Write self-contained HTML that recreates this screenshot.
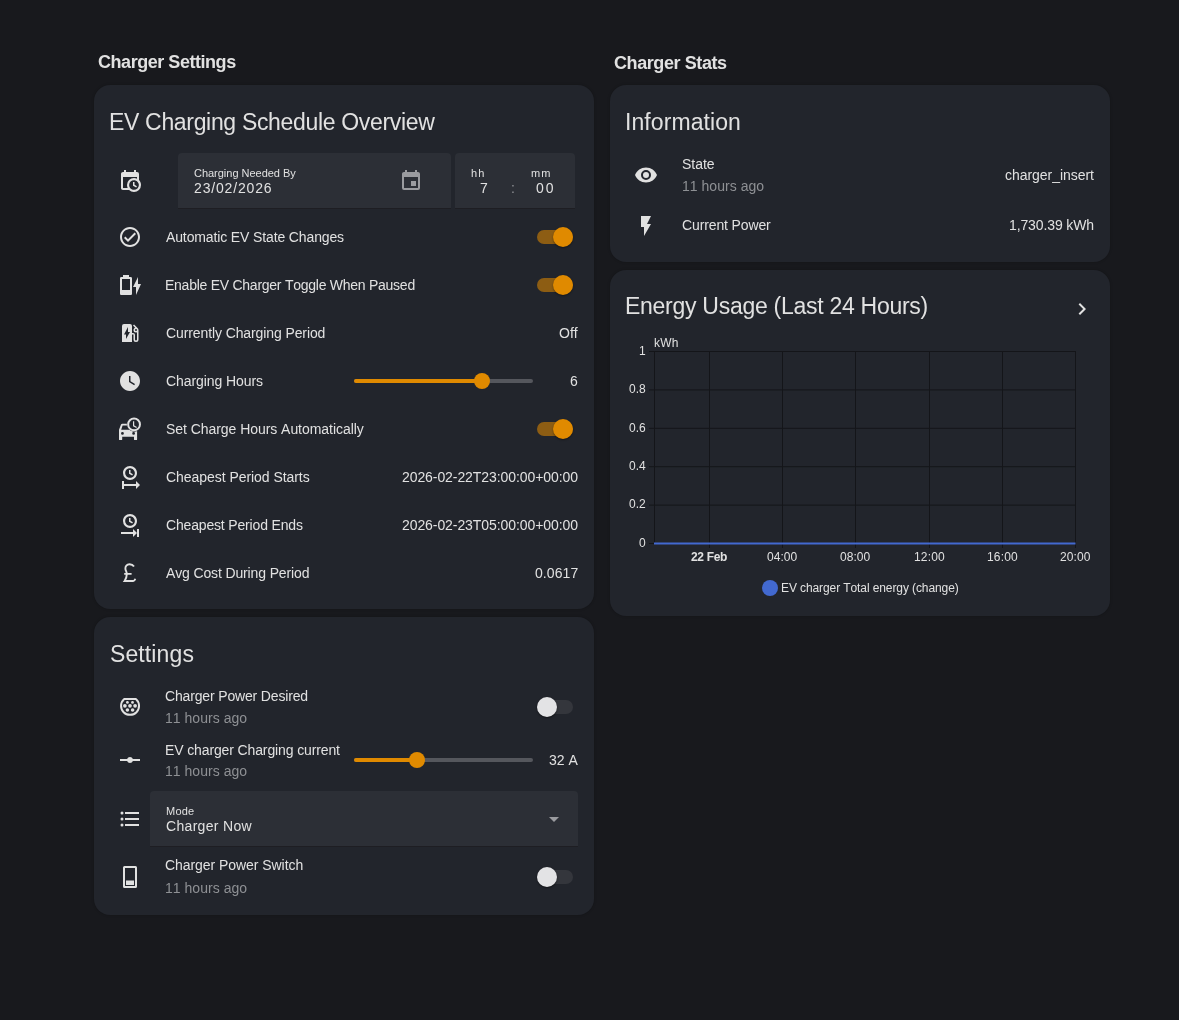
<!DOCTYPE html>
<html><head><meta charset="utf-8"><style>
html,body{margin:0;padding:0;width:1179px;height:1020px;overflow:hidden;background:rgb(24,25,29);}
body{position:relative;font-family:"Liberation Sans",sans-serif;}
.t{position:absolute;white-space:nowrap;line-height:1;font-kerning:none;will-change:transform;}
.r{position:absolute;}
.i{position:absolute;overflow:visible;}
</style></head><body>
<div class="r" style="left:94px;top:85px;width:500px;height:524px;background:rgb(34,37,44);border-radius:16px;box-shadow:0 0 3px rgba(0,0,0,0.22);"></div>
<div class="r" style="left:94px;top:617px;width:500px;height:298px;background:rgb(34,37,44);border-radius:16px;box-shadow:0 0 3px rgba(0,0,0,0.22);"></div>
<div class="r" style="left:610px;top:85px;width:500px;height:177px;background:rgb(34,37,44);border-radius:16px;box-shadow:0 0 3px rgba(0,0,0,0.22);"></div>
<div class="r" style="left:610px;top:270px;width:500px;height:346px;background:rgb(34,37,44);border-radius:16px;box-shadow:0 0 3px rgba(0,0,0,0.22);"></div>
<div class="t" style="left:97.76px;top:53.46px;font-size:18px;color:#e1e1e1;font-weight:bold;letter-spacing:-0.457px;">Charger Settings</div>
<div class="t" style="left:613.56px;top:53.76px;font-size:18px;color:#e1e1e1;font-weight:bold;letter-spacing:-0.413px;">Charger Stats</div>
<div class="t" style="left:109.11px;top:110.53px;font-size:23px;color:#e1e1e1;letter-spacing:-0.326px;">EV Charging Schedule Overview</div>
<div class="r" style="left:178px;top:153px;width:273px;height:56px;background:rgb(44,47,54);border-radius:4px 4px 0 0;border-bottom:1px solid rgb(30,30,35);box-sizing:border-box;"></div>
<div class="r" style="left:455px;top:153px;width:120px;height:56px;background:rgb(44,47,54);border-radius:4px 4px 0 0;border-bottom:1px solid rgb(30,30,35);box-sizing:border-box;"></div>
<svg class="i" style="left:118.0px;top:169.0px;width:24px;height:24px" viewBox="0 0 24 24"><path fill="#e1e1e1" d="M15,13H16.5V15.82L18.94,17.23L18.19,18.53L15,16.69V13M19,8H5V19H9.67C9.24,18.09 9,17.07 9,16A7,7 0 0,1 16,9C17.07,9 18.09,9.24 19,9.67V8M5,21C3.89,21 3,20.1 3,19V5C3,3.89 3.89,3 5,3H6V1H8V3H16V1H18V3H19A2,2 0 0,1 21,5V11.1C22.24,12.36 23,14.09 23,16A7,7 0 0,1 16,23C14.09,23 12.36,22.24 11.1,21H5M16,11.15A4.85,4.85 0 0,0 11.15,16C11.15,18.68 13.32,20.85 16,20.85A4.85,4.85 0 0,0 20.85,16C20.85,13.32 18.68,11.15 16,11.15Z"/></svg>
<div class="t" style="left:193.94px;top:167.69px;font-size:11px;color:#e1e1e1;letter-spacing:-0.020px;clip-path:inset(-4px -4px 0.6px -4px);">Charging Needed By</div>
<div class="t" style="left:193.80px;top:180.95px;font-size:14px;color:#e1e1e1;letter-spacing:0.839px;">23/02/2026</div>
<svg class="i" style="left:399.0px;top:169.0px;width:24px;height:24px" viewBox="0 0 24 24"><path fill="#9a9b9f" d="M19,19H5V8H19M16,1V3H8V1H6V3H5C3.89,3 3,3.89 3,5V19A2,2 0 0,0 5,21H19A2,2 0 0,0 21,19V5C21,3.89 20.1,3 19,3H18V1M17,12H12V17H17V12Z"/></svg>
<div class="t" style="left:470.74px;top:167.69px;font-size:11px;color:#e1e1e1;letter-spacing:1.042px;">hh</div>
<div class="t" style="left:530.57px;top:167.69px;font-size:11px;color:#e1e1e1;letter-spacing:1.029px;">mm</div>
<div class="t" style="left:479.78px;top:180.95px;font-size:14px;color:#e1e1e1;">7</div>
<div class="t" style="left:510.52px;top:180.95px;font-size:14px;color:#8e9094;">:</div>
<div class="t" style="left:536.15px;top:180.95px;font-size:14px;color:#e1e1e1;letter-spacing:2.021px;">00</div>
<svg class="i" style="left:118.0px;top:225.0px;width:24px;height:24px" viewBox="0 0 24 24"><path fill="#e1e1e1" d="M12 2C6.5 2 2 6.5 2 12S6.5 22 12 22 22 17.5 22 12 17.5 2 12 2M12 20C7.59 20 4 16.41 4 12S7.59 4 12 4 20 7.59 20 12 16.41 20 12 20M16.59 7.58L10 14.17L7.41 11.59L6 13L10 17L18 9L16.59 7.58Z"/></svg>
<div class="t" style="left:166.37px;top:230.15px;font-size:14px;color:#e1e1e1;letter-spacing:-0.128px;">Automatic EV State Changes</div>
<svg class="i" style="left:118.0px;top:273.0px;width:24px;height:24px" viewBox="0 0 24 24"><path fill="#e1e1e1" d="M23,11H20V4L15,14H18V22L23,11Z M12.67,4H11V2H5V4H3.33A1.33,1.33 0 0,0 2,5.33V20.67C2,21.4 2.6,22 3.33,22H12.67C13.4,22 14,21.4 14,20.67V5.33A1.33,1.33 0 0,0 12.67,4M12,17H4V6H12V17Z"/></svg>
<div class="t" style="left:165.25px;top:278.15px;font-size:14px;color:#e1e1e1;letter-spacing:-0.257px;">Enable EV Charger Toggle When Paused</div>
<svg class="i" style="left:118.0px;top:321.0px;width:24px;height:24px" viewBox="0 0 24 24"><path fill="#e1e1e1" d="M19.77,7.23L19.78,7.22L16.06,3.5L15,4.56L17.11,6.67C16.17,7.03 15.5,7.93 15.5,9A2.5,2.5 0 0,0 18,11.5C18.36,11.5 18.69,11.42 19,11.29V18.5A1,1 0 0,1 18,19.5A1,1 0 0,1 17,18.5V14A2,2 0 0,0 15,12H14V5A2,2 0 0,0 12,3H6A2,2 0 0,0 4,5V21H14V13.5H15.5V18.5A2.5,2.5 0 0,0 18,21A2.5,2.5 0 0,0 20.5,18.5V9C20.5,8.31 20.22,7.68 19.77,7.23M18,10A1,1 0 0,1 17,9A1,1 0 0,1 18,8A1,1 0 0,1 19,9A1,1 0 0,1 18,10M8,18V13.5H6L10,6V11H12L8,18Z"/></svg>
<div class="t" style="left:165.69px;top:326.15px;font-size:14px;color:#e1e1e1;letter-spacing:-0.102px;">Currently Charging Period</div>
<svg class="i" style="left:118.0px;top:369.0px;width:24px;height:24px" viewBox="0 0 24 24"><path fill="#e1e1e1" d="M12 2C6.5 2 2 6.5 2 12C2 17.5 6.5 22 12 22C17.5 22 22 17.5 22 12S17.5 2 12 2M16.2 16.2L11 13V7H12.5V12.2L17 14.9L16.2 16.2Z"/></svg>
<div class="t" style="left:165.69px;top:374.15px;font-size:14px;color:#e1e1e1;letter-spacing:-0.079px;">Charging Hours</div>
<div class="t" style="left:165.76px;top:422.15px;font-size:14px;color:#e1e1e1;letter-spacing:-0.050px;">Set Charge Hours Automatically</div>
<svg class="i" style="left:118.0px;top:465.0px;width:24px;height:24px" viewBox="0 0 24 24"><path fill="#e1e1e1" d="M12,1C8.14,1 5,4.14 5,8A7,7 0 0,0 12,15C15.86,15 19,11.87 19,8C19,4.14 15.86,1 12,1M12,3.15C14.67,3.15 16.85,5.32 16.85,8C16.85,10.68 14.67,12.85 12,12.85A4.85,4.85 0 0,1 7.15,8A4.85,4.85 0 0,1 12,3.15M11,5V8.69L14.19,10.53L14.94,9.23L12.5,7.82V5M4,16V24H6V21H18V24L22,20L18,16V19H6V16"/></svg>
<div class="t" style="left:165.69px;top:470.15px;font-size:14px;color:#e1e1e1;letter-spacing:-0.049px;">Cheapest Period Starts</div>
<svg class="i" style="left:118.0px;top:513.0px;width:24px;height:24px" viewBox="0 0 24 24"><path fill="#e1e1e1" d="M12,1C8.14,1 5,4.14 5,8A7,7 0 0,0 12,15C15.86,15 19,11.87 19,8C19,4.14 15.86,1 12,1M12,3.15C14.67,3.15 16.85,5.32 16.85,8C16.85,10.68 14.67,12.85 12,12.85A4.85,4.85 0 0,1 7.15,8A4.85,4.85 0 0,1 12,3.15M11,5V8.69L14.19,10.53L14.94,9.23L12.5,7.82V5M15,16V19H3V21H15V24L19,20M19,20V24H21V16H19"/></svg>
<div class="t" style="left:165.69px;top:518.15px;font-size:14px;color:#e1e1e1;letter-spacing:-0.167px;">Cheapest Period Ends</div>
<div class="t" style="left:166.37px;top:566.15px;font-size:14px;color:#e1e1e1;letter-spacing:-0.136px;">Avg Cost During Period</div>
<svg class="i" style="left:118px;top:417px;width:24px;height:24px" viewBox="0 0 24 24"><defs><mask id="cm"><rect x="0" y="0" width="24" height="24" fill="#fff"/><circle cx="16.05" cy="7.45" r="7.2" fill="#000"/></mask></defs><path mask="url(#cm)" fill="#e1e1e1" fill-rule="evenodd" d="M1,12.8 L3,7.6 C3.2,7.1 3.7,6.8 4.3,6.8 H15.8 C16.4,6.8 16.9,7.1 17.1,7.6 L19.1,12.8 V22.4 C19.1,22.7 18.8,23 18.5,23 H16.6 C16.3,23 16,22.7 16,22.4 V19.8 H4.2 V22.4 C4.2,22.7 3.9,23 3.6,23 H1.6 C1.3,23 1,22.7 1,22.4 Z M3.2,12.8 L4.6,8.4 H15.5 L16.9,12.8 Z M4.45,15 A1.4,1.4 0 1,0 4.45,17.8 A1.4,1.4 0 1,0 4.45,15 Z M15.6,15 A1.4,1.4 0 1,0 15.6,17.8 A1.4,1.4 0 1,0 15.6,15 Z"/><circle cx="16.05" cy="7.45" r="5.9" fill="none" stroke="#e1e1e1" stroke-width="2"/><path d="M15.6,4.2 V8.8 L18.6,10.6" fill="none" stroke="#e1e1e1" stroke-width="1.2"/></svg>
<svg class="i" style="left:118px;top:561px;width:24px;height:24px" viewBox="0 0 24 24"><path d="M16,5.6 C15,4 13.3,3.3 11.5,3.3 C8.8,3.3 7.2,5.3 7.4,7.8 C7.6,9.8 8.8,11 8.8,13 C8.8,16 7.6,18.6 6.6,20 H15.2 C16.3,20 17,18.8 17.3,17.8 M6.2,12.9 H13.6" fill="none" stroke="#e1e1e1" stroke-width="1.9"/></svg>
<div class="r" style="left:537px;top:230px;width:36px;height:14px;background:rgba(224,138,0,0.56);border-radius:7px;"></div>
<div class="r" style="left:553px;top:227px;width:20px;height:20px;background:rgb(224,138,0);border-radius:50%;box-shadow:0 1px 2px rgba(0,0,0,0.4);"></div>
<div class="r" style="left:537px;top:278px;width:36px;height:14px;background:rgba(224,138,0,0.56);border-radius:7px;"></div>
<div class="r" style="left:553px;top:275px;width:20px;height:20px;background:rgb(224,138,0);border-radius:50%;box-shadow:0 1px 2px rgba(0,0,0,0.4);"></div>
<div class="t" style="left:558.81px;top:326.15px;font-size:14px;color:#e1e1e1;">Off</div>
<div class="r" style="left:354px;top:379px;width:179px;height:4px;background:rgb(85,87,93);border-radius:2px;"></div>
<div class="r" style="left:354px;top:379px;width:128px;height:4px;background:rgb(224,138,0);border-radius:2px;"></div>
<div class="r" style="left:474px;top:373px;width:16px;height:16px;background:rgb(224,138,0);border-radius:50%;"></div>
<div class="t" style="left:570.33px;top:374.15px;font-size:14px;color:#e1e1e1;">6</div>
<div class="r" style="left:537px;top:422px;width:36px;height:14px;background:rgba(224,138,0,0.56);border-radius:7px;"></div>
<div class="r" style="left:553px;top:419px;width:20px;height:20px;background:rgb(224,138,0);border-radius:50%;box-shadow:0 1px 2px rgba(0,0,0,0.4);"></div>
<div class="t" style="left:402.10px;top:470.15px;font-size:14px;color:#e1e1e1;letter-spacing:-0.080px;">2026-02-22T23:00:00+00:00</div>
<div class="t" style="left:402.10px;top:518.15px;font-size:14px;color:#e1e1e1;letter-spacing:-0.080px;">2026-02-23T05:00:00+00:00</div>
<div class="t" style="left:534.95px;top:566.15px;font-size:14px;color:#e1e1e1;letter-spacing:0.086px;">0.0617</div>
<div class="t" style="left:109.56px;top:642.53px;font-size:23px;color:#e1e1e1;letter-spacing:0.110px;">Settings</div>
<svg class="i" style="left:118px;top:695px;width:24px;height:24px" viewBox="0 0 24 24"><path fill="#e1e1e1" fill-rule="evenodd" d="M5.95,2.95 H18.15 A10,10 0 1,1 5.95,2.95 Z M6.65,4.95 A8,8 0 1,0 17.45,4.95 Z"/><circle cx="9.4" cy="7.4" r="1.4" fill="#e1e1e1"/><circle cx="14.5" cy="7.4" r="1.4" fill="#e1e1e1"/><circle cx="6.9" cy="10.8" r="1.85" fill="#e1e1e1"/><circle cx="12" cy="10.8" r="1.85" fill="#e1e1e1"/><circle cx="17.1" cy="10.8" r="1.85" fill="#e1e1e1"/><circle cx="9.4" cy="15.06" r="1.8" fill="#e1e1e1"/><circle cx="14.6" cy="15.06" r="1.8" fill="#e1e1e1"/></svg>
<div class="t" style="left:165.49px;top:689.15px;font-size:14px;color:#e1e1e1;letter-spacing:-0.158px;">Charger Power Desired</div>
<div class="t" style="left:165.13px;top:710.75px;font-size:14px;color:#8e9094;letter-spacing:0.029px;">11 hours ago</div>
<div class="r" style="left:537px;top:700px;width:36px;height:14px;background:rgb(52,54,60);border-radius:7px;"></div>
<div class="r" style="left:537px;top:697px;width:20px;height:20px;background:#e3e3e5;border-radius:50%;box-shadow:0 1px 2px rgba(0,0,0,0.5);"></div>
<svg class="i" style="left:118.0px;top:748.0px;width:24px;height:24px" viewBox="0 0 24 24"><path fill="#e1e1e1" d="M2,11H9.17C9.58,9.83 10.69,9 12,9C13.31,9 14.42,9.83 14.83,11H22V13H14.83C14.42,14.17 13.31,15 12,15C10.69,15 9.58,14.17 9.17,13H2V11Z"/></svg>
<div class="t" style="left:165.05px;top:742.75px;font-size:14px;color:#e1e1e1;letter-spacing:-0.125px;">EV charger Charging current</div>
<div class="t" style="left:165.13px;top:764.15px;font-size:14px;color:#8e9094;letter-spacing:0.029px;">11 hours ago</div>
<div class="r" style="left:354px;top:758px;width:179px;height:4px;background:rgb(85,87,93);border-radius:2px;"></div>
<div class="r" style="left:354px;top:758px;width:63px;height:4px;background:rgb(224,138,0);border-radius:2px;"></div>
<div class="r" style="left:409px;top:752px;width:16px;height:16px;background:rgb(224,138,0);border-radius:50%;"></div>
<div class="t" style="left:548.77px;top:753.35px;font-size:14px;color:#e1e1e1;letter-spacing:-0.013px;">32 A</div>
<div class="r" style="left:150px;top:791px;width:428px;height:56px;background:rgb(44,47,54);border-radius:4px 4px 0 0;border-bottom:1px solid rgb(30,30,35);box-sizing:border-box;"></div>
<svg class="i" style="left:118.0px;top:806.5px;width:24px;height:24px" viewBox="0 0 24 24"><path fill="#e1e1e1" d="M7,5H21V7H7V5M7,13V11H21V13H7M4,4.5A1.5,1.5 0 0,1 5.5,6A1.5,1.5 0 0,1 4,7.5A1.5,1.5 0 0,1 2.5,6A1.5,1.5 0 0,1 4,4.5M4,10.5A1.5,1.5 0 0,1 5.5,12A1.5,1.5 0 0,1 4,13.5A1.5,1.5 0 0,1 2.5,12A1.5,1.5 0 0,1 4,10.5M7,19V17H21V19H7M4,16.5A1.5,1.5 0 0,1 5.5,18A1.5,1.5 0 0,1 4,19.5A1.5,1.5 0 0,1 2.5,18A1.5,1.5 0 0,1 4,16.5Z"/></svg>
<div class="t" style="left:165.60px;top:805.79px;font-size:11px;color:#e1e1e1;letter-spacing:0.225px;">Mode</div>
<div class="t" style="left:165.79px;top:819.05px;font-size:14px;color:#e1e1e1;letter-spacing:0.320px;">Charger Now</div>
<svg class="i" style="left:542.0px;top:807.0px;width:24px;height:24px" viewBox="0 0 24 24"><path fill="#9a9b9f" d="M7,10L12,15L17,10H7Z"/></svg>
<svg class="i" style="left:118px;top:865px;width:24px;height:24px" viewBox="0 0 24 24"><path fill="#e1e1e1" fill-rule="evenodd" d="M6.5,1 H17.5 A1.5,1.5 0 0 1 19,2.5 V21.5 A1.5,1.5 0 0 1 17.5,23 H6.5 A1.5,1.5 0 0 1 5,21.5 V2.5 A1.5,1.5 0 0 1 6.5,1 Z M7,3 V21 H17 V3 Z M8,15.6 H16 V20 H8 Z"/></svg>
<div class="t" style="left:165.49px;top:858.05px;font-size:14px;color:#e1e1e1;letter-spacing:-0.056px;">Charger Power Switch</div>
<div class="t" style="left:165.13px;top:880.95px;font-size:14px;color:#8e9094;letter-spacing:0.029px;">11 hours ago</div>
<div class="r" style="left:537px;top:870px;width:36px;height:14px;background:rgb(52,54,60);border-radius:7px;"></div>
<div class="r" style="left:537px;top:867px;width:20px;height:20px;background:#e3e3e5;border-radius:50%;box-shadow:0 1px 2px rgba(0,0,0,0.5);"></div>
<div class="t" style="left:624.78px;top:110.63px;font-size:23px;color:#e1e1e1;letter-spacing:0.076px;">Information</div>
<svg class="i" style="left:634.0px;top:163.0px;width:24px;height:24px" viewBox="0 0 24 24"><path fill="#e1e1e1" d="M12,9A3,3 0 0,0 9,12A3,3 0 0,0 12,15A3,3 0 0,0 15,12A3,3 0 0,0 12,9M12,17A5,5 0 0,1 7,12A5,5 0 0,1 12,7A5,5 0 0,1 17,12A5,5 0 0,1 12,17M12,4.5C7,4.5 2.73,7.61 1,12C2.73,16.39 7,19.5 12,19.5C17,19.5 21.27,16.39 23,12C21.27,7.61 17,4.5 12,4.5Z"/></svg>
<div class="t" style="left:681.96px;top:157.15px;font-size:14px;color:#e1e1e1;letter-spacing:-0.033px;">State</div>
<div class="t" style="left:681.53px;top:179.25px;font-size:14px;color:#8e9094;letter-spacing:0.029px;">11 hours ago</div>
<div class="t" style="left:1004.71px;top:168.05px;font-size:14px;color:#e1e1e1;letter-spacing:-0.046px;">charger_insert</div>
<svg class="i" style="left:634.0px;top:214.0px;width:24px;height:24px" viewBox="0 0 24 24"><path fill="#e1e1e1" d="M7,2V13H10V22L17,10H13L17,2H7Z"/></svg>
<div class="t" style="left:681.89px;top:218.15px;font-size:14px;color:#e1e1e1;letter-spacing:-0.126px;">Current Power</div>
<div class="t" style="left:1009.33px;top:217.95px;font-size:14px;color:#e1e1e1;letter-spacing:-0.119px;">1,730.39 kWh</div>
<div class="t" style="left:624.91px;top:294.83px;font-size:23px;color:#e1e1e1;letter-spacing:-0.275px;">Energy Usage (Last 24 Hours)</div>
<svg class="i" style="left:1070.0px;top:297.0px;width:24px;height:24px" viewBox="0 0 24 24"><path fill="#e1e1e1" d="M8.59,16.58L13.17,12L8.59,7.41L10,6L16,12L10,18L8.59,16.58Z"/></svg>
<svg class="i" style="left:0px;top:0px;width:1179px;height:1020px" viewBox="0 0 1179 1020"><line x1="649" y1="351.5" x2="1076" y2="351.5" stroke="rgb(20,21,25)" stroke-width="1"/><line x1="649" y1="389.9" x2="1076" y2="389.9" stroke="rgb(20,21,25)" stroke-width="1"/><line x1="649" y1="428.3" x2="1076" y2="428.3" stroke="rgb(20,21,25)" stroke-width="1"/><line x1="649" y1="466.7" x2="1076" y2="466.7" stroke="rgb(20,21,25)" stroke-width="1"/><line x1="649" y1="505.1" x2="1076" y2="505.1" stroke="rgb(20,21,25)" stroke-width="1"/><line x1="649" y1="543.5" x2="1076" y2="543.5" stroke="rgb(20,21,25)" stroke-width="1"/><line x1="654.5" y1="351" x2="654.5" y2="543" stroke="rgb(20,21,25)" stroke-width="1"/><line x1="709.5" y1="351" x2="709.5" y2="548" stroke="rgb(20,21,25)" stroke-width="1"/><line x1="782.5" y1="351" x2="782.5" y2="548" stroke="rgb(20,21,25)" stroke-width="1"/><line x1="855.5" y1="351" x2="855.5" y2="548" stroke="rgb(20,21,25)" stroke-width="1"/><line x1="929.5" y1="351" x2="929.5" y2="548" stroke="rgb(20,21,25)" stroke-width="1"/><line x1="1002.5" y1="351" x2="1002.5" y2="548" stroke="rgb(20,21,25)" stroke-width="1"/><line x1="1075.5" y1="351" x2="1075.5" y2="548" stroke="rgb(20,21,25)" stroke-width="1"/><line x1="654" y1="543.5" x2="1075.5" y2="543.5" stroke="#4269d0" stroke-width="2"/></svg>
<div class="t" style="left:639.41px;top:344.84px;font-size:12px;color:#e1e1e1;">1</div>
<div class="t" style="left:629.34px;top:383.24px;font-size:12px;color:#e1e1e1;">0.8</div>
<div class="t" style="left:629.35px;top:421.64px;font-size:12px;color:#e1e1e1;">0.6</div>
<div class="t" style="left:629.17px;top:460.04px;font-size:12px;color:#e1e1e1;">0.4</div>
<div class="t" style="left:629.42px;top:498.44px;font-size:12px;color:#e1e1e1;">0.2</div>
<div class="t" style="left:639.29px;top:536.84px;font-size:12px;color:#e1e1e1;">0</div>
<div class="t" style="left:653.79px;top:336.64px;font-size:12px;color:#e1e1e1;letter-spacing:0.244px;">kWh</div>
<div class="t" style="left:691.33px;top:550.74px;font-size:12px;color:#e1e1e1;font-weight:bold;letter-spacing:-0.321px;">22 Feb</div>
<div class="t" style="left:767.38px;top:550.74px;font-size:12px;color:#e1e1e1;letter-spacing:0.052px;">04:00</div>
<div class="t" style="left:840.38px;top:550.74px;font-size:12px;color:#e1e1e1;letter-spacing:0.052px;">08:00</div>
<div class="t" style="left:913.94px;top:550.74px;font-size:12px;color:#e1e1e1;letter-spacing:0.163px;">12:00</div>
<div class="t" style="left:986.94px;top:550.74px;font-size:12px;color:#e1e1e1;letter-spacing:0.163px;">16:00</div>
<div class="t" style="left:1060.25px;top:550.74px;font-size:12px;color:#e1e1e1;letter-spacing:0.086px;">20:00</div>
<div class="r" style="left:762px;top:580px;width:16px;height:16px;background:#4269d0;border-radius:50%;"></div>
<div class="t" style="left:781.02px;top:581.64px;font-size:12px;color:#e1e1e1;letter-spacing:-0.098px;">EV charger Total energy (change)</div>
</body></html>
